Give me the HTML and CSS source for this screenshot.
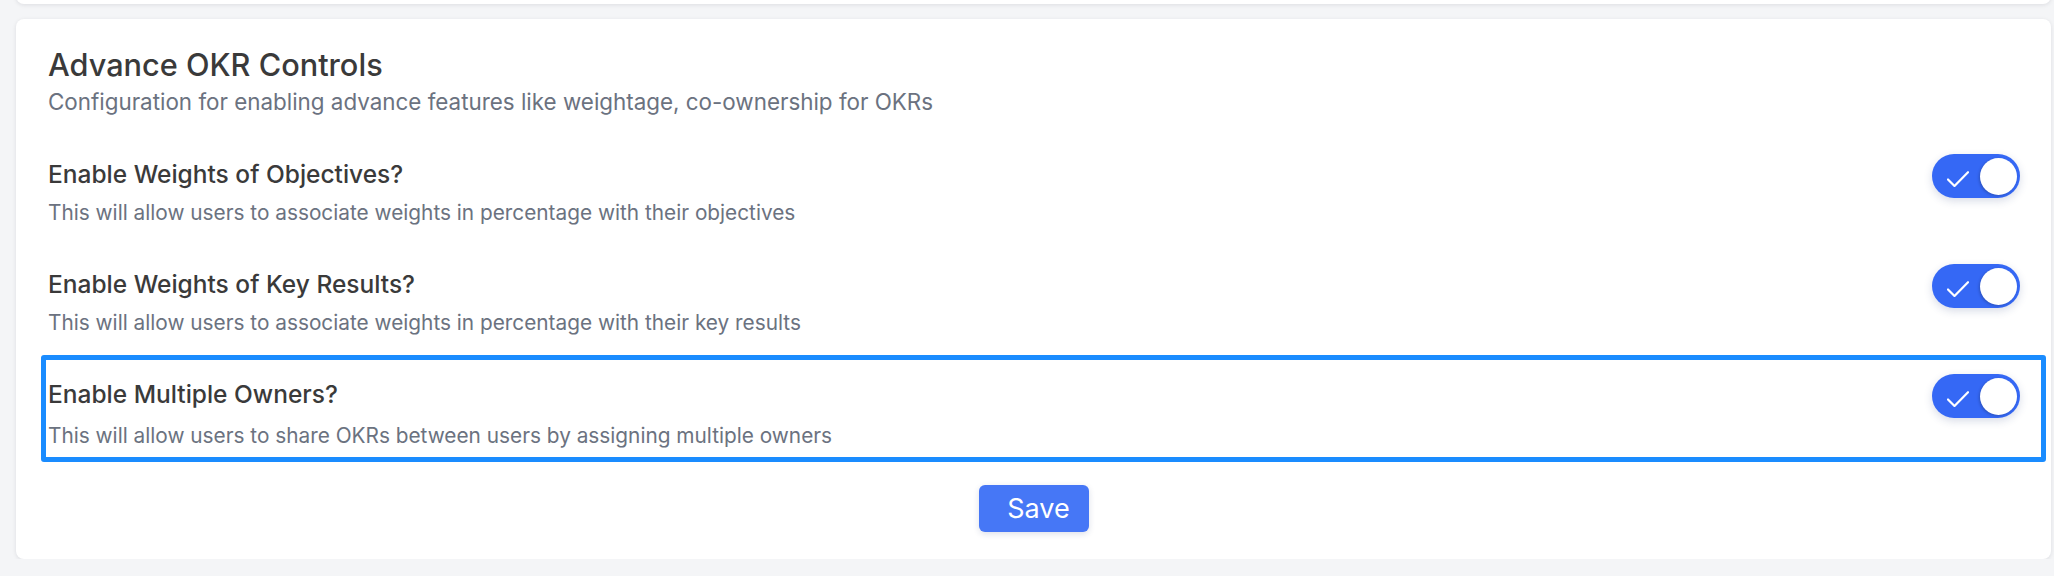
FILE: index.html
```html
<!DOCTYPE html>
<html lang="en">
<head>
<meta charset="utf-8">
<title>Advance OKR Controls</title>
<link rel="stylesheet" href="styles.css">
</head>
<body>
<div class="page">
  <div class="card card-prev"></div>
  <section class="card settings">
    <header class="settings-head">
      <h2 class="settings-title">Advance OKR Controls</h2>
      <p class="settings-sub">Configuration for enabling advance features like weightage, co-ownership for OKRs</p>
    </header>

    <div class="row">
      <div class="row-text">
        <h3 class="row-title">Enable Weights of Objectives?</h3>
        <p class="row-desc">This will allow users to associate weights in percentage with their objectives</p>
      </div>
      <span class="toggle is-on">
        <svg class="toggle-check" viewBox="0 0 22 16" width="22" height="16"><path d="M1 8.5 L7.5 15 L21 1.2"/></svg>
        <span class="toggle-knob"></span>
      </span>
    </div>

    <div class="row">
      <div class="row-text">
        <h3 class="row-title">Enable Weights of Key Results?</h3>
        <p class="row-desc">This will allow users to associate weights in percentage with their key results</p>
      </div>
      <span class="toggle is-on">
        <svg class="toggle-check" viewBox="0 0 22 16" width="22" height="16"><path d="M1 8.5 L7.5 15 L21 1.2"/></svg>
        <span class="toggle-knob"></span>
      </span>
    </div>

    <div class="highlight">
      <div class="row row-hl">
        <div class="row-text">
          <h3 class="row-title">Enable Multiple Owners?</h3>
          <p class="row-desc">This will allow users to share OKRs between users by assigning multiple owners</p>
        </div>
        <span class="toggle is-on">
          <svg class="toggle-check" viewBox="0 0 22 16" width="22" height="16"><path d="M1 8.5 L7.5 15 L21 1.2"/></svg>
          <span class="toggle-knob"></span>
        </span>
      </div>
    </div>

    <div class="actions">
      <button class="btn-save" type="button">Save</button>
    </div>
  </section>
</div>
</body>
</html>
```

FILE: styles.css
```css
* { box-sizing: border-box; }

html, body {
  margin: 0;
  padding: 0;
}

body {
  background: #f4f5f7;
  font-family: Inter, "Liberation Sans", Arial, sans-serif;
  color: #3a3a3a;
  overflow: hidden;
}

.page {
  padding: 0 3px 0 16px;
}

.card {
  background: #ffffff;
  border-radius: 8px;
  box-shadow: 0 1px 4px rgba(20, 24, 40, 0.10);
}

.card-prev {
  height: 20px;
  margin-top: -16px;
  border-radius: 0 0 8px 8px;
}

.settings {
  margin-top: 15px;
  padding: 27px 31px 27px 32px;
}

.settings-head {
  margin-bottom: 22px;
}

.settings-title {
  margin: 0;
  font-size: 30.7px;
  line-height: 38px;
  font-weight: 500;
  color: #3a3a3a;
}

.settings-sub {
  margin: 5px 0 0;
  font-size: 22.4px;
  line-height: 26px;
  font-weight: 400;
  color: #6b7280;
}

.row {
  display: flex;
  justify-content: space-between;
  align-items: flex-start;
  padding: 22px 0 20px;
}

.row-title {
  margin: 0;
  font-size: 24.5px;
  line-height: 30px;
  font-weight: 500;
  color: #3a3a3a;
}

.row-desc {
  margin: 10px 0 0;
  font-size: 20.8px;
  line-height: 28px;
  font-weight: 400;
  color: #6b7280;
}

.highlight {
  margin: -2px -26px 0 -7px;
  padding: 0 21px 0 2px;
  border: 5px solid #1a8cff;
  border-radius: 3px;
}

.row-hl {
  padding: 19px 0 7px;
}

.row-hl .row-desc {
  margin-top: 13px;
}

.toggle {
  flex: none;
  display: flex;
  align-items: center;
  justify-content: space-between;
  width: 88px;
  height: 44px;
  margin-top: -5px;
  padding: 0 3px 0 15px;
  border-radius: 22px;
  background: #3568f5;
  box-shadow: 0 3px 8px rgba(40, 60, 120, 0.18);
}

.toggle-check {
  margin-top: 5px;
  fill: none;
  stroke: #ffffff;
  stroke-width: 2.2;
  stroke-linecap: round;
  stroke-linejoin: round;
}

.toggle-knob {
  width: 37px;
  height: 37px;
  border-radius: 50%;
  background: #ffffff;
  box-shadow: -1px 1px 3px rgba(0, 0, 0, 0.22);
}

.actions {
  display: flex;
  justify-content: center;
  margin-top: 23px;
}

.btn-save {
  height: 47px;
  padding: 0 19px 0 28px;
  border: none;
  border-radius: 6px;
  background: #4677f6;
  color: #ffffff;
  font-family: Inter, "Liberation Sans", Arial, sans-serif;
  font-size: 27px;
  font-weight: 400;
  box-shadow: 0 2px 6px rgba(30, 50, 110, 0.15);
}
```
